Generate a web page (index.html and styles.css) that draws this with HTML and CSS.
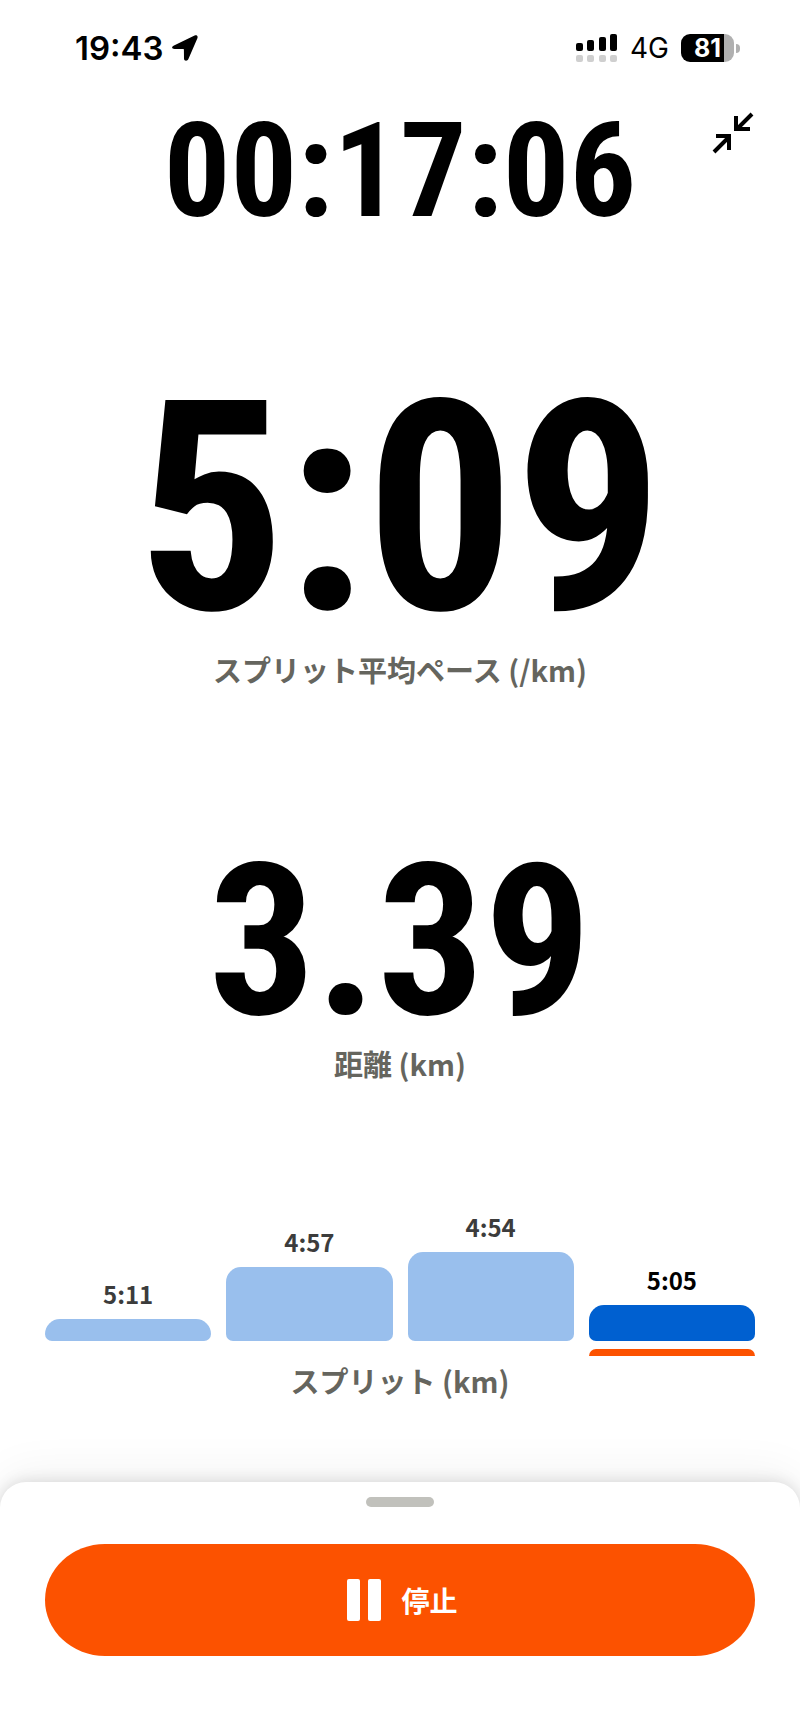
FILE: index.html
```html
<!DOCTYPE html>
<html lang="ja">
<head>
    <meta charset="UTF-8">
    <meta name="viewport" content="width=device-width, initial-scale=1.0">
    <title>ラン記録</title>
    <link rel="stylesheet" href="styles.css">
</head>
<body>
    <!-- Status bar -->
    <div class="status_bar">
        <div class="status_left">
            <span class="clock">19:43</span>
            <svg class="location" width="26" height="26" viewBox="0 0 26 26">
                <path d="M2 10.4 L22.6 0.6 C24.6 -0.2 26.2 1 25.4 3.2 L16.4 24 C15.4 26.4 12 26.2 12 23.4 L11.9 14.6 C11.9 14.2 11.7 14 11.3 14 L2.6 13.9 C-0.4 13.8 -0.8 11.7 2 10.4 Z" fill="#000"/>
            </svg>
        </div>
        <div class="status_right">
            <svg class="signal" width="42" height="28" viewBox="0 0 42 28">
                <g fill="#000">
                    <rect x="0" y="9" width="7" height="8" rx="2"/>
                    <rect x="11" y="6" width="7" height="11" rx="2"/>
                    <rect x="23" y="3" width="7" height="14" rx="2"/>
                    <rect x="34" y="0" width="7" height="17" rx="2"/>
                </g>
                <g fill="#cfcfcf">
                    <rect x="0" y="21" width="7" height="7" rx="2"/>
                    <rect x="11" y="21" width="7" height="7" rx="2"/>
                    <rect x="23" y="21" width="7" height="7" rx="2"/>
                    <rect x="34" y="21" width="7" height="7" rx="2"/>
                </g>
            </svg>
            <span class="network">4G</span>
            <div class="battery">
                <div class="battery_body">81</div>
                <div class="battery_tip"></div>
            </div>
        </div>
    </div>

    <!-- Timer -->
    <div class="timer_row">
        <div class="timer">00:17:06</div>
        <button type="button" class="minimize" aria-label="縮小">
            <svg width="42" height="42" viewBox="0 0 42 42" fill="none" stroke="#000" stroke-width="4">
                <path d="M40 2 L25 17 M24 4 V17 H38"/>
                <path d="M2 40 L17 25 M4 24 H17 V38"/>
            </svg>
        </button>
    </div>

    <!-- Stats -->
    <div class="stats">
        <div class="stat">
            <div class="value pace">5:09</div>
            <div class="label">スプリット平均ペース (/km)</div>
        </div>
        <div class="stat">
            <div class="value distance">3.39</div>
            <div class="label">距離 (km)</div>
        </div>
        <div class="splits">
            <div class="bars">
                <div class="split">
                    <span class="split_time">5:11</span>
                    <div class="bar" style="height: 22px"></div>
                </div>
                <div class="split">
                    <span class="split_time">4:57</span>
                    <div class="bar" style="height: 74px"></div>
                </div>
                <div class="split">
                    <span class="split_time">4:54</span>
                    <div class="bar" style="height: 89px"></div>
                </div>
                <div class="split current">
                    <span class="split_time">5:05</span>
                    <div class="bar" style="height: 36px"></div>
                </div>
            </div>
            <div class="markers">
                <div class="marker"></div>
            </div>
            <div class="label">スプリット (km)</div>
        </div>
    </div>

    <!-- Bottom sheet -->
    <div class="sheet">
        <div class="handle"></div>
        <button type="button" class="stop">
            <svg width="34" height="42" viewBox="0 0 34 42" fill="#fff">
                <rect x="0" y="0" width="13" height="42" rx="2"/>
                <rect x="21" y="0" width="13" height="42" rx="2"/>
            </svg>
            <span>停止</span>
        </button>
    </div>
</body>
</html>
```
FILE: styles.css
```css
* {
    margin: 0;
    padding: 0;
    box-sizing: border-box;
}

body {
    min-height: 100vh;
    display: flex;
    flex-direction: column;
    background-color: #fff;
    color: #000;
    font-family: "Noto Sans CJK JP", sans-serif;
    overflow-x: hidden;
}

button {
    border: none;
    background: none;
    cursor: pointer;
}

svg {
    display: block;
}

/* Status bar */
.status_bar {
    display: flex;
    justify-content: space-between;
    align-items: center;
    height: 96px;
    padding: 0 60px 0 75px;
    font-family: Inter, sans-serif;
}

.status_left {
    display: flex;
    align-items: center;
    gap: 8px;
}

.clock {
    font-size: 33px;
    font-weight: 600;
}

.status_right {
    display: flex;
    align-items: center;
    gap: 12px;
}

.network {
    font-size: 28px;
}

.battery {
    display: flex;
    align-items: center;
    gap: 2px;
}

.battery_body {
    width: 53px;
    height: 28px;
    border-radius: 9px;
    background: linear-gradient(to right, #000 81%, #b0b0b0 81%);
    color: #fff;
    font-size: 25px;
    font-weight: 700;
    line-height: 28px;
    text-align: center;
}

.battery_tip {
    width: 4px;
    height: 9px;
    border-radius: 0 5px 5px 0;
    background-color: #b0b0b0;
}

/* Timer */
.timer_row {
    display: grid;
    grid-template-columns: 1fr auto 1fr;
    align-items: start;
    padding: 16px 46px 0;
}

.timer,
.value {
    font-family: "Roboto Condensed", Roboto, sans-serif;
    font-weight: 700;
    text-align: center;
}

.timer {
    grid-column: 2;
    font-size: 132px;
    line-height: 118px;
}

.minimize {
    justify-self: end;
}

/* Stats */
.stats {
    flex: 1;
    padding: 0 45px;
}

.stat {
    text-align: center;
}

.pace {
    margin-top: 156px;
    font-size: 294px;
    line-height: 246px;
}

.distance {
    margin-top: 169px;
    font-size: 212px;
    line-height: 168px;
}

.label {
    color: #65655e;
    font-size: 29px;
    font-weight: 700;
    line-height: 40px;
    text-align: center;
}

.stat .label {
    margin-top: 17px;
}

.splits {
    margin-top: 128px;
}

.bars,
.markers {
    display: grid;
    grid-template-columns: repeat(4, 1fr);
    gap: 15px;
}

.bars {
    align-items: end;
}

.split {
    text-align: center;
}

.split_time {
    display: block;
    margin-bottom: 9px;
    color: #3c3c3c;
    font-size: 24px;
    font-weight: 700;
    line-height: 32px;
}

.bar {
    border-radius: 15px 15px 7px 7px;
    background-color: #99bfed;
}

.current .split_time {
    color: #000;
}

.current .bar {
    background-color: #0060d0;
}

.markers {
    margin-top: 8px;
}

.marker {
    grid-column: 4;
    height: 7px;
    border-radius: 8px 8px 0 0;
    background-color: #fc5200;
}

.splits .label {
    margin-top: 4px;
}

/* Bottom sheet */
.sheet {
    padding: 15px 45px 74px;
    border-radius: 26px 26px 0 0;
    background-color: #fff;
    box-shadow: 0 0 16px rgba(0, 0, 0, 0.14), 0 -8px 48px rgba(0, 0, 0, 0.06);
}

.handle {
    width: 68px;
    height: 10px;
    margin: 0 auto 37px;
    border-radius: 5px;
    background-color: #c1c1bc;
}

.stop {
    display: flex;
    justify-content: center;
    align-items: center;
    gap: 20px;
    width: 100%;
    height: 112px;
    padding-left: 5px;
    border-radius: 60px / 56px;
    background-color: #fc5200;
    color: #fff;
    font-family: inherit;
    font-size: 28px;
    font-weight: 700;
}
```
